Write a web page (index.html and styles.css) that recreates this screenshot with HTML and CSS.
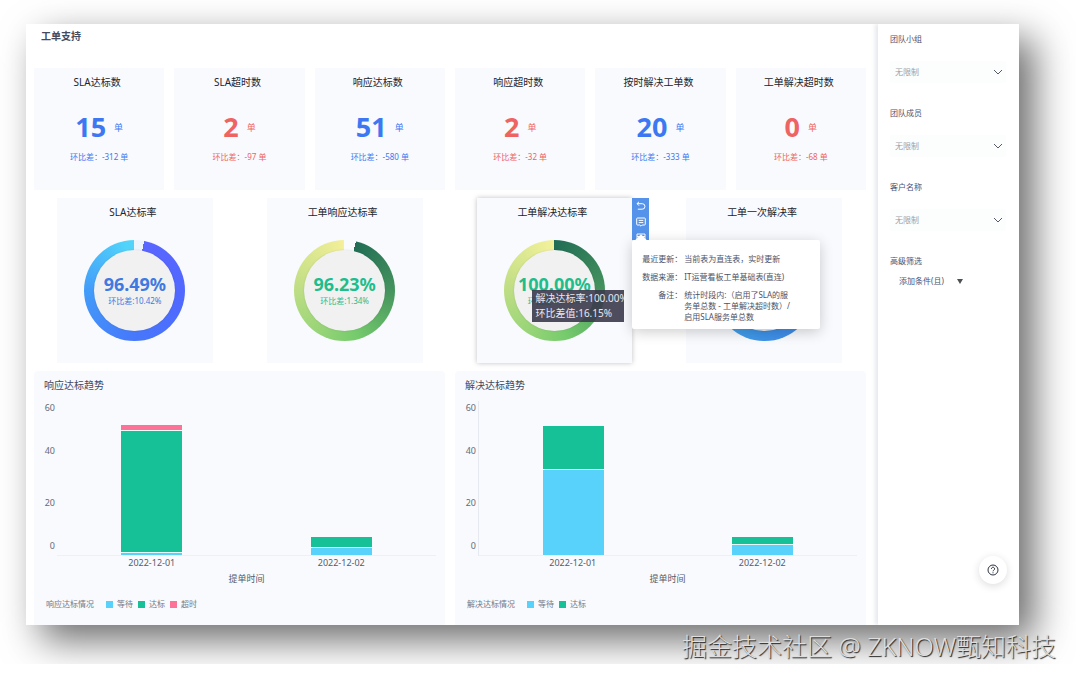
FILE: index.html
```
<!DOCTYPE html>
<html lang="zh-CN">
<head>
<meta charset="utf-8">
<meta name="viewport" content="width=device-width, initial-scale=1">
<title>工单支持</title>
<link rel="stylesheet" href="styles.css">
</head>
<body>
<div class="window">
  <main class="board">
    <h1 class="board-title">工单支持</h1>

    <section class="stats">
      <article class="stat blue"><h2>SLA达标数</h2><p class="value"><strong>15</strong><span>单</span></p><p class="delta">环比差：-312 单</p></article>
      <article class="stat red"><h2>SLA超时数</h2><p class="value"><strong>2</strong><span>单</span></p><p class="delta">环比差：-97 单</p></article>
      <article class="stat blue"><h2>响应达标数</h2><p class="value"><strong>51</strong><span>单</span></p><p class="delta">环比差：-580 单</p></article>
      <article class="stat red"><h2>响应超时数</h2><p class="value"><strong>2</strong><span>单</span></p><p class="delta">环比差：-32 单</p></article>
      <article class="stat blue"><h2>按时解决工单数</h2><p class="value"><strong>20</strong><span>单</span></p><p class="delta">环比差：-333 单</p></article>
      <article class="stat red"><h2>工单解决超时数</h2><p class="value"><strong>0</strong><span>单</span></p><p class="delta">环比差：-68 单</p></article>
    </section>

    <section class="gauges">
      <article class="gauge-card">
        <h2>SLA达标率</h2>
        <div class="ring ring-blue"><div class="disc"><strong>96.49%</strong><span>环比差:10.42%</span></div></div>
      </article>
      <article class="gauge-card">
        <h2>工单响应达标率</h2>
        <div class="ring ring-green"><div class="disc"><strong>96.23%</strong><span>环比差:1.34%</span></div></div>
      </article>
      <article class="gauge-card active">
        <h2>工单解决达标率</h2>
        <div class="ring ring-green full"><div class="disc"><strong>100.00%</strong><span>环比差:16.15%</span></div></div>
        <div class="chart-tip">解决达标率:100.00%<br>环比差值:16.15%</div>
        <div class="tools">
          <button type="button" aria-label="返回"><svg viewBox="0 0 10 10"><path d="M3 .8 1 2.7l2 2M1 2.7h5.2a2.6 2.6 0 0 1 0 5.5H1.8"/></svg></button>
          <button type="button" aria-label="备注"><svg viewBox="0 0 10 10"><path d="M1.5 1h7q.8 0 .8.8v5.4q0 .8-.8.8H6.2L5 9.2 3.8 8H1.5q-.8 0-.8-.8V1.800q0-.8.8-.8zM2.700 3.400h4.600M2.700 5.600h4.600"/></svg></button>
          <button type="button" aria-label="表格"><svg viewBox="0 0 10 10"><path d="M1 1h8v8H1zM1 3.500h8M5 3.500V9"/></svg></button>
        </div>
        <dl class="info">
          <dt>最近更新：</dt><dd>当前表为直连表，实时更新</dd>
          <dt>数据来源：</dt><dd>IT运营看板工单基础表(直连)</dd>
          <dt>备注：</dt><dd>统计时段内:（启用了SLA的服<br>务单总数 - 工单解决超时数）/<br>启用SLA服务单总数</dd>
        </dl>
      </article>
      <article class="gauge-card">
        <h2>工单一次解决率</h2>
        <div class="ring ring-sky"><div class="disc"></div></div>
      </article>
    </section>

    <section class="charts">
      <article class="chart">
        <h2>响应达标趋势</h2>
        <div class="plot-row">
          <div class="y-axis"><div><span>60</span><span>40</span></div><div><span>20</span><span>0</span></div></div>
          <div class="plot">
            <div class="bar"><i class="late" style="height:5px"></i><i class="ok" style="height:121px"></i><i class="wait" style="height:2px"></i></div>
            <div class="bar"><i class="ok" style="height:10px"></i><i class="wait" style="height:7px"></i></div>
          </div>
        </div>
        <div class="x-axis"><span>2022-12-01</span><span>2022-12-02</span></div>
        <p class="x-title">提单时间</p>
        <p class="legend"><span class="legend-name">响应达标情况</span><i class="wait"></i><span>等待</span><i class="ok"></i><span>达标</span><i class="late"></i><span>超时</span></p>
      </article>
      <article class="chart">
        <h2>解决达标趋势</h2>
        <div class="plot-row">
          <div class="y-axis"><div><span>60</span><span>40</span></div><div><span>20</span><span>0</span></div></div>
          <div class="plot lined">
            <div class="bar"><i class="ok" style="height:43px"></i><i class="wait" style="height:85px"></i></div>
            <div class="bar"><i class="ok" style="height:7px"></i><i class="wait" style="height:10px"></i></div>
          </div>
        </div>
        <div class="x-axis"><span>2022-12-01</span><span>2022-12-02</span></div>
        <p class="x-title">提单时间</p>
        <p class="legend"><span class="legend-name">解决达标情况</span><i class="wait"></i><span>等待</span><i class="ok"></i><span>达标</span></p>
      </article>
    </section>
  </main>

  <aside class="filters">
    <div class="field"><label for="group">团队小组</label><div class="select"><select id="group"><option>无限制</option></select><svg viewBox="0 0 10 6"><path d="M1 1l4 4 4-4"/></svg></div></div>
    <div class="field"><label for="member">团队成员</label><div class="select"><select id="member"><option>无限制</option></select><svg viewBox="0 0 10 6"><path d="M1 1l4 4 4-4"/></svg></div></div>
    <div class="field"><label for="client">客户名称</label><div class="select"><select id="client"><option>无限制</option></select><svg viewBox="0 0 10 6"><path d="M1 1l4 4 4-4"/></svg></div></div>
    <h2>高级筛选</h2>
    <button type="button" class="add">添加条件(且)<svg viewBox="0 0 6 5"><path d="M0 0h6L3 5z"/></svg></button>
    <button type="button" class="help" aria-label="帮助"><svg viewBox="0 0 12 12"><circle cx="6" cy="6" r="5"/><path d="M4.400 4.800a1.600 1.600 0 1 1 2.400 1.400Q6 6.600 6 7.300M6 8.300v1"/></svg></button>
  </aside>
</div>
<footer class="watermark">掘金技术社区 @ ZKNOW甄知科技</footer>
</body>
</html>
```
FILE: styles.css
```
* { box-sizing: border-box; }
body {
  margin: 0;
  padding: 24px 57px 0 26px;
  background: #fff;
  color: #2f3444;
  font-family: "Noto Sans", "Noto Sans CJK SC", sans-serif;
  font-size: 8px;
  line-height: 12px;
}
h1, h2, p, dl, dd { margin: 0; font-weight: 400; }
button, select { font: inherit; color: inherit; border: 0; padding: 0; background: none; }
svg { display: block; fill: none; stroke: currentColor; }

.window {
  display: grid;
  grid-template-columns: minmax(0, 1fr) 141px;
  background: #fff;
  box-shadow: 15px 15px 36px rgba(0, 0, 0, .58);
}
.board { padding: 0 12px 0 8px; display: flex; flex-direction: column; gap: 8px; }
.board-title { padding: 5px 7px 0; height: 36px; font-size: 10px; line-height: 14px; font-weight: 700; color: #454a5e; }

h2 { font-size: 10px; line-height: 14px; color: #22252e; }
.stats { display: grid; grid-template-columns: repeat(6, 1fr); gap: 10px; }
.stat { padding: 7px 0 27px; background: #f8fafd; text-align: center; }
.stat h2, .gauge-card h2 { padding-right: 4px; }
.blue { color: #3d78f2; }
.red { color: #ee6462; }
.value { display: flex; justify-content: center; align-items: center; gap: 8px; margin-top: 18px; line-height: 36px; font-size: 9px; }
.value strong { font-size: 27px; }
.value span { padding-top: 3px; }
.delta { margin-top: 5px; }

.gauges { display: grid; grid-template-columns: repeat(4, 1fr); gap: 54px; padding: 0 24px 0 23px; }
.gauge-card { position: relative; padding: 7px 0 22px; background: #f8fafd; text-align: center; }
.gauge-card.active { z-index: 1; box-shadow: 0 0 5px rgba(0, 0, 0, .25); }
.ring { width: 101px; height: 101px; margin: 21px auto 0; padding: 10px; border-radius: 50%; }
.ring-blue { background: conic-gradient(#eef4fb 0 11deg, #5a66ff 11deg, #5068ff 100deg, #4678fb 180deg, #429cf9 270deg, #52d4fa 350deg 359deg, #eef4fb 360deg); }
.ring-green { background: conic-gradient(#f8fafc 0 13deg, #216d55 13deg, #45935e 90deg, #75cb6c 165deg, #96d477 210deg, #c4df86 280deg, #f2ef98 357deg, #f5f29b 360deg); }
.ring-green.full { background: conic-gradient(#216d55, #45935e 90deg, #75cb6c 165deg, #96d477 210deg, #c4df86 280deg, #f5f29b 360deg); }
.ring-sky { background: conic-gradient(#4b78fa, #3d92e8 180deg, #52d4fa); }
.disc { display: flex; flex-direction: column; justify-content: center; height: 100%; border-radius: 50%; background: #f1f1f1; box-shadow: 0 0 2px rgba(0, 0, 0, .12); color: #4079e0; white-space: nowrap; }
.ring-green .disc { color: #1fbd8c; }
.disc strong { align-self: center; font-size: 18px; line-height: 19px; }
.disc span { line-height: 13px; }

.chart-tip { position: absolute; left: 55px; top: 92px; width: 92px; padding: 1px 4px; overflow: hidden; background: rgba(58, 58, 77, .9); color: #e6e8f0; font-size: 10px; line-height: 15px; text-align: left; white-space: nowrap; }
.tools { position: absolute; left: 100%; top: 0; width: 17px; height: 42px; overflow: hidden; background: #5592ea; color: #fff; }
.tools button { display: flex; width: 100%; height: 16px; justify-content: center; align-items: center; }
.tools svg { width: 10px; height: 10px; }
.info { position: absolute; z-index: 2; left: 100%; top: 42px; width: 188px; padding: 13px 0 7px 10px; display: grid; grid-template-columns: 40px 1fr; gap: 7px 2px; border-radius: 2px; background: #fff; box-shadow: 0 3px 14px rgba(0, 0, 0, .2); color: #4d5265; line-height: 11px; text-align: left; white-space: nowrap; }
.info::before { content: ""; position: absolute; left: 5px; top: -4px; width: 8px; height: 8px; background: #fff; transform: rotate(45deg); }
.info dt { text-align: right; }

.charts { display: grid; grid-template-columns: repeat(2, 1fr); gap: 10px; }
.chart { padding: 7px 9px 15px 10px; background: #f8fafd; border-radius: 4px 4px 0 0; }
.chart h2 { color: #414865; }
.plot-row { display: flex; margin-top: 9px; height: 155px; }
.y-axis { display: flex; flex-direction: column; justify-content: space-between; width: 13px; padding: 2px 2px 5px 0; font-size: 9px; line-height: 10px; text-align: right; color: #666b7a; }
.y-axis div { display: flex; flex-direction: column; justify-content: space-between; height: 53px; }
.plot { flex: 1; display: grid; grid-template-columns: 1fr 1fr; align-items: end; border-bottom: 1px solid #edf0f5; }
.plot.lined { border-left: 1px solid #e6e9ef; }
.bar { width: 32%; margin: 0 auto; display: flex; flex-direction: column; gap: 1px; background: #e9fbf8; }
.bar i { display: block; }
.wait { background: #58d2fb; }
.ok { background: #17c198; }
.late { background: #fd7398; }
.x-axis { display: grid; grid-template-columns: 1fr 1fr; margin: 1px 0 0 13px; text-align: center; font-size: 9px; line-height: 12px; color: #565b6b; }
.x-title { margin-top: 4px; text-align: center; font-size: 9px; padding-left: 13px; color: #565b6b; }
.legend { display: flex; align-items: center; gap: 4px; margin-top: 13px; padding-left: 2px; color: #737887; }
.legend i { width: 7px; height: 7px; margin-left: 1px; }
.legend-name { margin-right: 7px; }

.filters { display: flex; flex-direction: column; position: relative; padding: 9px 13px 41px 12px; background: #fff; box-shadow: -3px 0 4px #e6e9ed; clip-path: inset(0 0 0 -8px); color: #4c5270; }
.field { display: flex; flex-direction: column; gap: 16px; margin-bottom: 24px; }
.filters label, .filters h2 { font-size: 8px; line-height: 12px; color: #4c5270; }
.select { position: relative; }
.select select { appearance: none; width: 100%; height: 22px; padding: 0 5px; border-radius: 2px; background: #fcfdfd; color: #9b9fa8; }
.select svg { position: absolute; right: 3px; top: 8px; width: 10px; height: 6px; color: #555b66; pointer-events: none; }
.add { display: flex; align-items: center; gap: 13px; margin-top: 8px; padding-left: 9px; line-height: 12px; }
.add svg { width: 6px; height: 5px; fill: #4c5158; stroke: none; }
.help { display: grid; place-items: center; width: 28px; height: 28px; margin: auto -1px 0 auto; border-radius: 50%; background: #fff; box-shadow: 0 2px 8px rgba(0, 0, 0, .14); color: #2c3240; }
.help svg { width: 12px; height: 12px; }

.watermark { position: relative; margin: 3px -37px 0 0; text-align: right; font-size: 25px; line-height: 36px; font-weight: 300; color: #dedede; text-shadow: 1px 1px 1px #222; }
```
